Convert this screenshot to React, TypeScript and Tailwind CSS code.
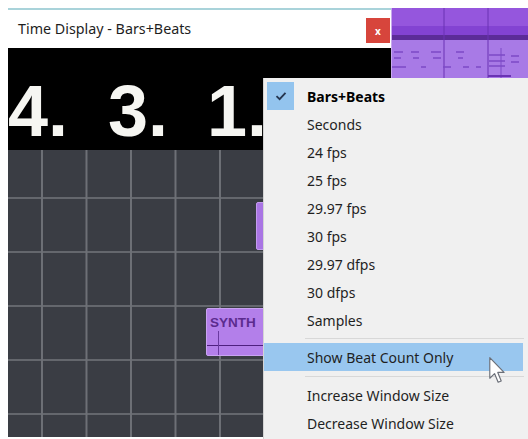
import React from 'react';

const formats = ['Bars+Beats', 'Seconds', '24 fps', '25 fps', '29.97 fps', '30 fps', '29.97 dfps', '30 dfps', 'Samples'];

function Check() {
  return (
    <svg width="12" height="10" viewBox="0 0 12 10" fill="none">
      <path d="M1.5 5.2 L4.6 8.2 L10.5 1.8" stroke="#253650" strokeWidth="1.8" />
    </svg>
  );
}

function Cursor() {
  return (
    <svg width="17" height="27" viewBox="0 0 13 21">
      <path
        d="M0.5 0.5 L0.5 16.5 L4.2 12.9 L7 19.6 L9.4 18.6 L6.7 12 L11.6 12 Z"
        fill="#ffffff"
        stroke="#6b6f78"
        strokeWidth="0.9"
        strokeLinejoin="round"
      />
    </svg>
  );
}

// little midi notes on the purple arrange clip, top right
function ArrangeClip() {
  return (
    <svg className="absolute inset-0" width="137" height="142" viewBox="0 0 137 142">
      <line x1="52" y1="0" x2="52" y2="142" stroke="#6a33b4" strokeWidth="1" />
      <line x1="96" y1="0" x2="96" y2="142" stroke="#6a33b4" strokeWidth="1" />
      <g stroke="#7c4ac6" strokeWidth="1.5">
        <line x1="2" y1="44" x2="11" y2="44" />
        <line x1="19" y1="44" x2="27" y2="44" />
        <line x1="39" y1="44" x2="49" y2="44" />
        <line x1="64" y1="44" x2="72" y2="44" />
        <line x1="2" y1="50" x2="9" y2="50" />
        <line x1="21" y1="50" x2="27" y2="50" />
        <line x1="41" y1="50" x2="49" y2="50" />
        <line x1="66" y1="50" x2="71" y2="50" />
        <line x1="0" y1="59" x2="14" y2="59" />
        <line x1="29" y1="59" x2="34" y2="59" />
        <line x1="51" y1="59" x2="59" y2="59" />
        <line x1="71" y1="59" x2="77" y2="59" />
        <line x1="84" y1="59" x2="89" y2="59" />
        <line x1="97" y1="47" x2="113" y2="47" />
        <line x1="97" y1="53" x2="113" y2="53" />
        <line x1="97" y1="58" x2="113" y2="58" />
        <line x1="119" y1="48" x2="127" y2="48" />
        <line x1="119" y1="54" x2="127" y2="54" />
      </g>
      <line x1="109" y1="40" x2="109" y2="70" stroke="#7c4ac6" strokeWidth="1" />
      <line x1="96" y1="68" x2="119" y2="68" stroke="#6a33b4" strokeWidth="2" />
    </svg>
  );
}

export default function App() {
  return (
    <div
      className="relative w-[528px] h-[439px] overflow-hidden bg-white pl-2 pt-2"
      style={{ fontFamily: '"Noto Sans", "Open Sans", sans-serif' }}
    >
      {/* time display window + arrange strip */}
      <div className="flex h-[142px]">
        <div className="w-[383px] flex flex-col">
          <div className="h-[40px] border-t-2 border-[#a9d3da] bg-white flex items-center justify-between pl-[10px]">
            <span className="text-[14.3px] text-[#1e1e1e]">Time Display - Bars+Beats</span>
            <div className="w-[24px] h-[25px] mt-[3px] mr-[1px] bg-[#d7453c] flex items-center justify-center text-white text-[10px] font-bold leading-none">
              x
            </div>
          </div>
          <div
            className="flex-1 bg-black flex pt-[27px] text-[72px] leading-[72px] font-bold text-[#f6f6f2]"
            style={{ fontFamily: '"Liberation Sans", Arial, sans-serif' }}
          >
            <span className="w-[100px] shrink-0">4.</span>
            <span className="w-[99px] shrink-0">3.</span>
            <span className="w-[99px] shrink-0">1.</span>
          </div>
        </div>
        <div className="relative flex-1 flex flex-col border-l border-[#c7a8ee]">
          <div className="h-[18px] bg-[#9556dd]" />
          <div className="h-[9px] bg-[#8343d2]" />
          <div className="h-[5px] bg-[#5c2c98]" />
          <div className="flex-1 bg-[#a87ae6]" />
          <ArrangeClip />
        </div>
      </div>

      {/* arrange grid */}
      <div className="relative h-[287px] bg-[#3a3d44] bg-[linear-gradient(to_right,#6d7076_2px,transparent_2px),linear-gradient(to_bottom,#64676d_2px,transparent_2px)] bg-[length:44.5px_54px] bg-[position:33px_47px]">
        <div className="absolute left-[248px] top-[52px] w-[12px] h-[48px] bg-[#a975e4] border border-[#c39af0] rounded-[2px]" />
        <div className="absolute left-[198px] top-[158px] w-[70px] h-[48px] bg-[#b37fea] border border-[#c9a3f2] rounded-[2px]">
          <div
            className="pl-[3px] pt-[7px] text-[13.5px] font-bold leading-none text-[#5b2b8e]"
            style={{ fontFamily: '"Liberation Sans", Arial, sans-serif' }}
          >
            SYNTH
          </div>
          <div className="absolute left-0 right-0 top-[36px] h-px bg-[#4f2080]" />
          <div className="absolute left-[11px] top-[22px] bottom-0 w-px bg-[#6a3aa0]" />
        </div>
      </div>

      {/* context menu */}
      <div className="absolute left-[263px] top-[78px] right-0 bottom-0 bg-[#f0f0f0] border-l border-[#d4d4d4] pt-[4px] text-[14px] text-[#1f1f1f]">
        {formats.map((f, i) => (
          <div key={f} className="h-[28px] flex items-center">
            <div className="w-[43px] h-full shrink-0 flex items-center">
              {i === 0 && (
                <div className="ml-[3px] w-[27px] h-[28px] bg-[#93c4ee] flex items-center justify-center">
                  <Check />
                </div>
              )}
            </div>
            <span className={i === 0 ? 'font-bold text-black' : ''}>{f}</span>
          </div>
        ))}
        <div className="h-[9px] flex items-center">
          <div className="ml-[41px] mr-[4px] flex-1 h-px bg-[#d8d8d8]" />
        </div>
        <div className="h-[28px] flex items-center bg-[#99c7ef] mr-[5px]">
          <div className="w-[43px] shrink-0" />
          <span>Show Beat Count Only</span>
        </div>
        <div className="h-[10px] flex items-center">
          <div className="ml-[41px] mr-[4px] flex-1 h-px bg-[#d8d8d8]" />
        </div>
        <div className="h-[28px] flex items-center">
          <div className="w-[43px] shrink-0" />
          <span>Increase Window Size</span>
        </div>
        <div className="h-[28px] flex items-center">
          <div className="w-[43px] shrink-0" />
          <span>Decrease Window Size</span>
        </div>
      </div>

      <div className="absolute left-[489px] top-[357px]">
        <Cursor />
      </div>
    </div>
  );
}
